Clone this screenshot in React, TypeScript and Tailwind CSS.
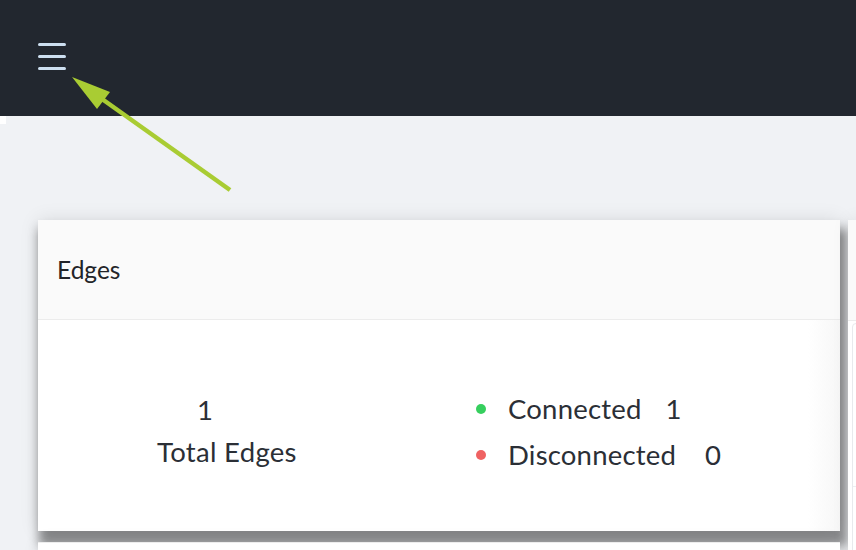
import React from "react";

const font = { fontFamily: "Lato, 'Open Sans', sans-serif" };

function Hamburger() {
  return (
    <div className="flex flex-col gap-[9px] w-[28px]">
      <div className="h-[3px] w-[28px] rounded-full bg-[#cddff0]" />
      <div className="h-[3px] w-[28px] rounded-full bg-[#cddff0]" />
      <div className="h-[3px] w-[28px] rounded-full bg-[#cddff0]" />
    </div>
  );
}

function Arrow() {
  return (
    <svg
      className="absolute left-0 top-0 pointer-events-none"
      width="260"
      height="200"
      viewBox="0 0 260 200"
    >
      <line x1="230" y1="190" x2="95" y2="94" stroke="#a9cc33" strokeWidth="4.5" />
      <polygon points="72,77 110,92 97,109" fill="#a9cc33" />
    </svg>
  );
}

export default function App() {
  return (
    <div
      className="relative w-[856px] h-[550px] overflow-hidden bg-[#f0f2f5]"
      style={font}
    >
      <header className="h-[116px] bg-[#22272f] flex items-center pl-[38px] pb-[4px]">
        <Hamburger />
      </header>
      <div className="w-[6px] h-[8px] bg-white" />
      <main className="pl-[38px] pt-[96px]">
        <div className="grid grid-cols-[802px_200px] gap-x-[8px] gap-y-[11px]">
          <section className="bg-white shadow-[0_0_18px_rgba(0,0,0,0.1),4px_12px_10px_3px_rgba(0,0,0,0.42)] h-[311px] flex flex-col">
            <div className="h-[100px] bg-[#fafafa] border-b border-[#ececec] flex items-center pl-[19px] pt-[2px]">
              <span className="text-[24.5px] text-[#222428] leading-none">Edges</span>
            </div>
            <div className="flex-1 flex bg-gradient-to-r from-white from-[96%] to-[#f7f7f7]">
              <div className="w-[420px] flex flex-col pl-[119px] pt-[75px]">
                <span className="text-[27.5px] leading-[30px] text-[#2b2f36] ml-[40px]">1</span>
                <span className="text-[27.5px] leading-[30px] text-[#2b2f36] mt-[12px] tracking-[0.3px]">Total Edges</span>
              </div>
              <div className="flex flex-col pt-[74px] pl-[18px] gap-[16px]">
                <div className="flex items-center">
                  <span className="w-[10px] h-[10px] rounded-full bg-[#36cf5e]" />
                  <span className="ml-[22px] text-[27.5px] leading-[30px] text-[#2b2f36] tracking-[0.2px]">Connected</span>
                  <span className="ml-[24px] text-[27.5px] leading-[30px] text-[#2b2f36]">1</span>
                </div>
                <div className="flex items-center">
                  <span className="w-[10px] h-[10px] rounded-full bg-[#ef6262]" />
                  <span className="ml-[22px] text-[27.5px] leading-[30px] text-[#2b2f36] tracking-[0.2px]">Disconnected</span>
                  <span className="ml-[29px] text-[27.5px] leading-[30px] text-[#2b2f36]">0</span>
                </div>
              </div>
            </div>
          </section>
          <section className="row-span-2 bg-white shadow-[0_0_16px_rgba(0,0,0,0.08)] flex flex-col">
            <div className="h-[101px] bg-[#fafafa] border-b border-[#ececec]" />
            <div className="pl-[4px] pt-[2px]">
              <div className="border border-[#e8eaed] rounded-[4px] h-[300px] flex flex-col">
                <div className="h-[163px] border-b border-[#eceef1]" />
              </div>
            </div>
          </section>
          <section className="bg-white border-t border-[#ededed] h-[200px] shadow-[0_0_16px_rgba(0,0,0,0.08)]" />
        </div>
      </main>
      <Arrow />
    </div>
  );
}
